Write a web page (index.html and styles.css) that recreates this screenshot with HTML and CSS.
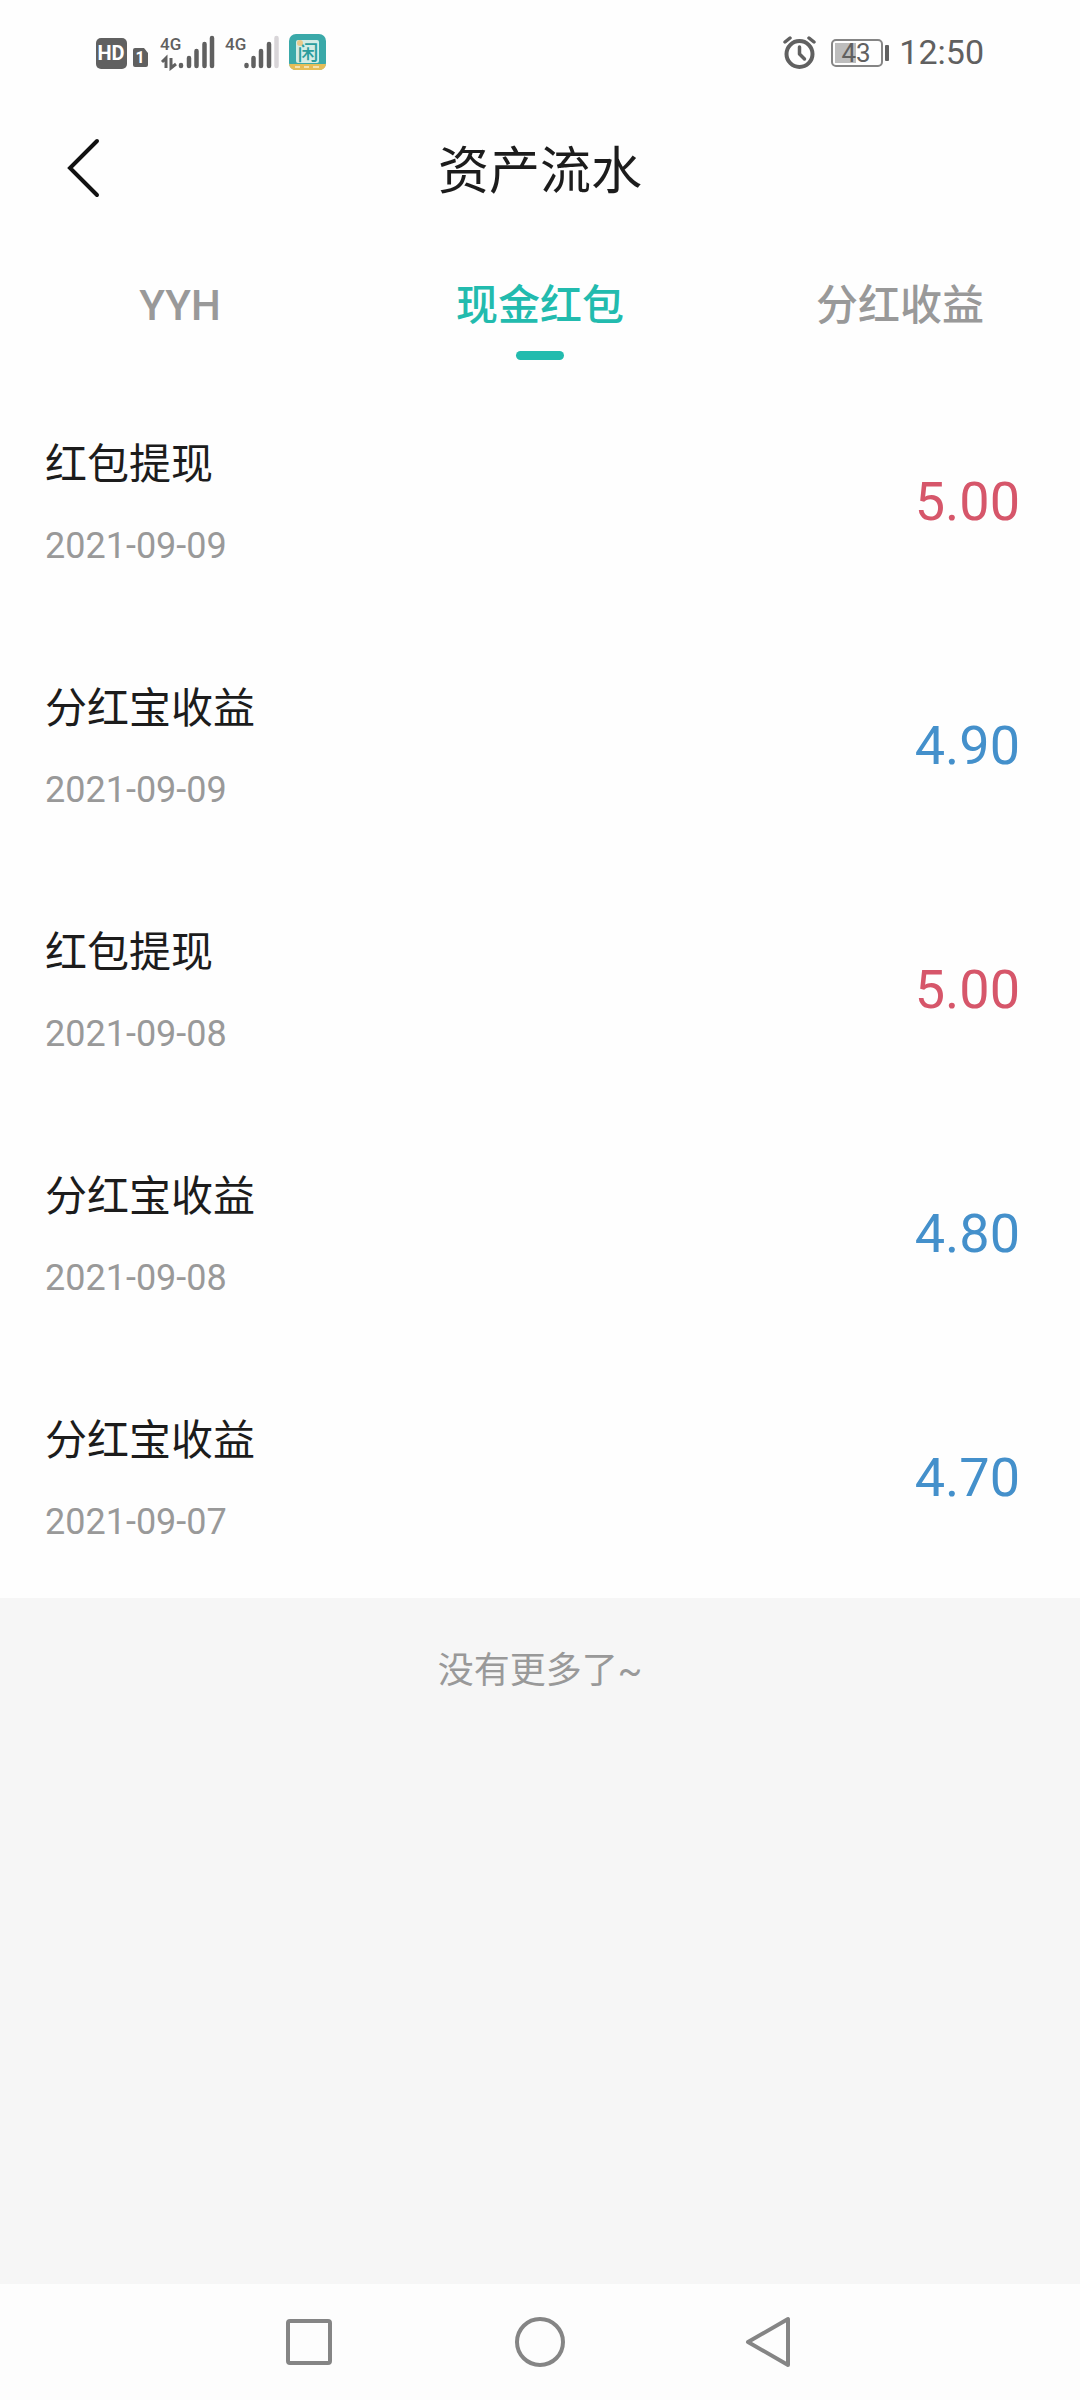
FILE: index.html
```html
<!DOCTYPE html>
<html lang="zh-CN">
<head>
<meta charset="utf-8">
<meta name="viewport" content="width=device-width">
<title>资产流水</title>
<link rel="stylesheet" href="styles.css">
</head>
<body>
<div class="statusbar">
  <div class="status-group">
    <svg width="54" height="38" viewBox="96 33 54 38" aria-hidden="true">
      <rect x="96" y="38" width="31" height="31" rx="5" fill="#606060"/>
      <text class="hd" x="111" y="60" text-anchor="middle">HD</text>
      <path d="M135 48h9l4 5v12q0 2-2 2h-11q-2 0-2-2v-15q0-2 2-2z" fill="#606060"/>
      <text class="sim" x="140" y="63" text-anchor="middle">1</text>
    </svg>
    <svg width="55" height="38" viewBox="160 33 55 38" aria-hidden="true">
      <text class="net" x="160" y="50">4G</text>
      <path d="M162 62l4-4v10M171 58v10l5-4" fill="none" stroke="#606060" stroke-width="3"/>
      <path d="M181 65v1M189 58v8M196.500 51v15M204.500 44v22M212 38v28" fill="none" stroke="#606060" stroke-width="4.500" stroke-linecap="round"/>
    </svg>
    <svg width="54" height="38" viewBox="225 33 54 38" aria-hidden="true">
      <text class="net" x="225" y="50">4G</text>
      <path d="M276.500 38v28" stroke="#d8d5d8" stroke-width="4.500" stroke-linecap="round"/>
      <path d="M246.500 65v1M253.500 58v8M261 51v15M269 44v22" fill="none" stroke="#606060" stroke-width="4.500" stroke-linecap="round"/>
    </svg>
    <svg width="37" height="38" viewBox="289 33 37 38" aria-hidden="true">
      <rect x="289" y="34" width="37" height="36" rx="7" fill="#3aa9a9"/>
      <path d="M289 64h37q-1 6-7 6h-23q-6 0-7-6z" fill="#e5bd58"/>
      <rect x="296" y="40" width="23" height="23" rx="2" fill="#d3ece6"/>
      <text class="app" x="308" y="60" text-anchor="middle">闲</text>
      <circle cx="300" cy="43" r="3" fill="#e9c98a"/>
      <path d="M295 67h5M304 67h5M313 67h6" stroke="#f4e2b0" stroke-width="2"/>
    </svg>
  </div>
  <div class="status-group">
    <svg width="38" height="38" viewBox="784 33 38 38" aria-hidden="true">
      <g fill="none" stroke="#606060" stroke-linecap="round" stroke-linejoin="round">
        <circle cx="800.500" cy="54" r="13" stroke-width="4"/>
        <path d="M800.500 47v7l5 5" stroke-width="3.500"/>
        <path d="M786 42l5-4M815 42l-5-4" stroke-width="3.500"/>
      </g>
    </svg>
    <svg width="58" height="38" viewBox="832 33 58 38" role="img" aria-label="电量 43%">
      <rect x="833" y="40" width="50" height="26" rx="4" fill="none" stroke="#858585" stroke-width="2"/>
      <rect x="836" y="43" width="21" height="20" fill="#bdbdbd"/>
      <rect x="886" y="45" width="4" height="16" rx="1" fill="#606060"/>
      <text class="level" x="857" y="62" text-anchor="middle">43</text>
    </svg>
    <time class="clock">12:50</time>
  </div>
</div>

<header class="header">
  <button class="back" type="button" aria-label="返回">
    <svg width="34" height="60" viewBox="0 0 34 60"><path d="M31 3L4 30l27 27" fill="none"/></svg>
  </button>
  <h1 class="title">资产流水</h1>
</header>

<nav class="tabs">
  <button class="tab" type="button">YYH</button>
  <button class="tab tab-active" type="button">现金红包</button>
  <button class="tab" type="button">分红收益</button>
</nav>

<main class="content">
  <ul class="list">
    <li class="row"><div class="info"><span class="name">红包提现</span><time class="date">2021-09-09</time></div><span class="amount out">5.00</span></li>
    <li class="row"><div class="info"><span class="name">分红宝收益</span><time class="date">2021-09-09</time></div><span class="amount in">4.90</span></li>
    <li class="row"><div class="info"><span class="name">红包提现</span><time class="date">2021-09-08</time></div><span class="amount out">5.00</span></li>
    <li class="row"><div class="info"><span class="name">分红宝收益</span><time class="date">2021-09-08</time></div><span class="amount in">4.80</span></li>
    <li class="row"><div class="info"><span class="name">分红宝收益</span><time class="date">2021-09-07</time></div><span class="amount in">4.70</span></li>
  </ul>
  <p class="end">没有更多了~</p>
</main>

<footer class="sysnav">
  <button class="key" type="button" aria-label="最近任务"><svg width="54" height="54" viewBox="0 0 54 54"><rect x="5" y="6" width="42" height="42" rx="2"/></svg></button>
  <button class="key" type="button" aria-label="主屏幕"><svg width="54" height="54" viewBox="0 0 54 54"><circle cx="27" cy="27" r="23"/></svg></button>
  <button class="key" type="button" aria-label="返回"><svg width="54" height="54" viewBox="0 0 54 54"><path d="M5 27L45 4v46z"/></svg></button>
</footer>
</body>
</html>
```

FILE: styles.css
```css
* {
  box-sizing: border-box;
}

body {
  margin: 0;
  min-height: 100vh;
  display: flex;
  flex-direction: column;
  background: #fefefe;
  color: #1c1c1c;
  font-family: Roboto, "Noto Sans CJK SC", sans-serif;
}

button {
  margin: 0;
  padding: 0;
  border: 0;
  background: none;
  font: inherit;
  color: inherit;
}

svg {
  display: block;
}

/* Status bar */
.statusbar {
  display: flex;
  justify-content: space-between;
  align-items: center;
  height: 104px;
  padding: 0 96px;
}

.status-group {
  display: flex;
  align-items: center;
  gap: 10px;
}

.clock {
  font-size: 34px;
  line-height: 38px;
  color: #606060;
}

.hd {
  font-size: 20px;
  font-weight: 700;
  fill: #fff;
}

.sim {
  font-size: 16px;
  font-weight: 700;
  fill: #fff;
}

.net {
  font-size: 17px;
  font-weight: 500;
  fill: #606060;
}

.app {
  font-size: 21px;
  font-weight: 500;
  fill: #2b9d9d;
}

.level {
  font-size: 26px;
  fill: #606060;
}

/* Page header */
.header {
  display: grid;
  grid-template-columns: 100px 1fr 100px;
  align-items: center;
  height: 128px;
}

.back {
  justify-self: end;
}

.back path {
  stroke: #111;
  stroke-width: 4px;
  stroke-linecap: round;
}

.title {
  margin: 0;
  padding-top: 8px;
  font-size: 51px;
  font-weight: 400;
  line-height: 64px;
  text-align: center;
}

/* Tabs */
.tabs {
  display: grid;
  grid-template-columns: repeat(3, 1fr);
  height: 146px;
}

.tab {
  display: flex;
  flex-direction: column;
  align-items: center;
  gap: 15px;
  padding-top: 44px;
  font-size: 42px;
  font-weight: 500;
  line-height: 60px;
  color: #999;
}

.tab-active {
  color: #22bbae;
}

.tab-active::after {
  content: "";
  width: 48px;
  height: 9px;
  border-radius: 5px;
  background: #22bbae;
}

/* Transaction list */
.content {
  flex: 1;
  background: #f6f6f6;
}

.list {
  margin: 0;
  padding: 0;
  list-style: none;
  background: #fefefe;
}

.row {
  display: flex;
  justify-content: space-between;
  align-items: center;
  height: 244px;
  padding: 4px 60px 0 45px;
}

.info {
  display: flex;
  flex-direction: column;
  gap: 27px;
}

.name {
  font-size: 42px;
  line-height: 60px;
}

.date {
  font-size: 36px;
  line-height: 48px;
  color: #999;
}

.amount {
  font-size: 54px;
  line-height: 64px;
}

.out {
  color: #d6566a;
}

.in {
  color: #4490cb;
}

.end {
  margin: 0;
  padding: 47px 0;
  font-size: 36px;
  line-height: 52px;
  text-align: center;
  color: #999;
}

/* System navigation */
.sysnav {
  display: flex;
  justify-content: center;
  align-items: center;
  gap: 176px;
  height: 116px;
  background: #fdfdfd;
}

.key svg {
  fill: none;
  stroke: #858585;
  stroke-width: 4px;
  stroke-linejoin: round;
}
```
